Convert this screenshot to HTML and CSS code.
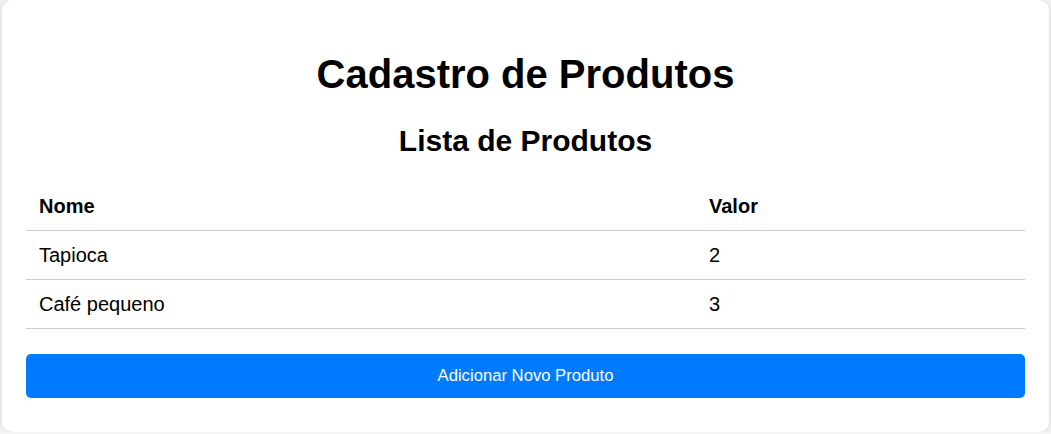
FILE: index.html
```html
<!DOCTYPE html>
<html lang="pt-BR">
<head>
<meta charset="utf-8">
<title>Cadastro de Produtos</title>
<link rel="stylesheet" href="styles.css">
</head>
<body>
  <div class="card">
    <h1 class="title">Cadastro de Produtos</h1>
    <h2 class="subtitle">Lista de Produtos</h2>
    <table class="products">
      <thead>
        <tr><th class="col-name">Nome</th><th>Valor</th></tr>
      </thead>
      <tbody>
        <tr><td>Tapioca</td><td>2</td></tr>
        <tr><td>Café pequeno</td><td>3</td></tr>
      </tbody>
    </table>
    <button class="add-btn" type="button">Adicionar Novo Produto</button>
  </div>
</body>
</html>
```

FILE: styles.css
```css
html, body {
  margin: 0;
  padding: 0;
  background: #f4f4f4;
  font-family: "Liberation Sans", Arial, sans-serif;
  color: #000;
}

.card {
  box-sizing: border-box;
  margin: 0 2px;
  height: 432px;
  background: #fff;
  border-radius: 10px;
  box-shadow: 0 0 8px rgba(0, 0, 0, 0.12);
  padding: 24px 24px 34px;
  display: flex;
  flex-direction: column;
}

.title {
  margin: 27px 0 0;
  font-size: 40px;
  line-height: 46px;
  font-weight: bold;
  text-align: center;
}

.subtitle {
  margin: 27px 0 24px;
  font-size: 30px;
  line-height: 34px;
  font-weight: bold;
  text-align: center;
}

.products {
  width: 100%;
  border-collapse: collapse;
  font-size: 20px;
}

.products th,
.products td {
  text-align: left;
  padding: 0 13px;
  height: 48px;
  border-bottom: 1px solid #cccccc;
}

.products th {
  font-weight: bold;
}

.col-name {
  width: 644px;
}

.add-btn {
  margin-top: 25px;
  height: 45px;
  width: 100%;
  border: none;
  border-radius: 5px;
  background: #007bff;
  color: #fff;
  font-family: "Liberation Sans", Arial, sans-serif;
  font-size: 16.67px;
  cursor: pointer;
}
```
